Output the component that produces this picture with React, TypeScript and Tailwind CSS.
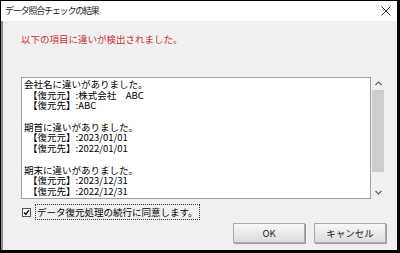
const lines = [
  "会社名に違いがありました。",
  "【復元元】:株式会社　ABC",
  "【復元先】:ABC",
  "",
  "期首に違いがありました。",
  "【復元元】:2023/01/01",
  "【復元先】:2022/01/01",
  "",
  "期末に違いがありました。",
  "【復元元】:2023/12/31",
  "【復元先】:2022/12/31",
];

function Chevron({ up }: { up?: boolean }) {
  return (
    <svg width="7" height="5" viewBox="0 0 7 5">
      <path
        d={up ? "M0.5 4 L3.5 1 L6.5 4" : "M0.5 1 L3.5 4 L6.5 1"}
        fill="none"
        stroke="#606060"
        strokeWidth="1.2"
      />
    </svg>
  );
}

export default function App() {
  return (
    <div className="flex h-[253px] w-[400px] flex-col border-t border-l border-r-[3px] border-b-[3px] border-black font-['Noto_Sans_CJK_JP',sans-serif] text-black">
      <div className="flex h-[20px] items-center justify-between bg-white pl-[4px] pr-[6px]">
        <span className="text-[9px] leading-[12px] tracking-[-1.2px] text-[#1a1a1a]">
          データ照合チェックの結果
        </span>
        <svg width="10" height="10" viewBox="0 0 10 10">
          <path d="M0.5 0.5 L9.5 9.5 M9.5 0.5 L0.5 9.5" stroke="#333" strokeWidth="1" />
        </svg>
      </div>

      <div className="flex flex-1 flex-col border-l-2 border-[#8c8c8c] bg-[#f0f0f0] pr-[11px]">
        <p className="mt-[12px] pl-[18px] text-[9.5px] leading-[12px] text-[#c8303a]">
          以下の項目に違いが検出されました。
        </p>

        <div className="ml-[18px] mt-[32px] flex h-[122px]">
          <div className="w-[353px] overflow-hidden border border-[#a0a0a0] bg-white pl-[2px] pt-[1px]">
            {lines.map((line, i) => (
              <div
                key={i}
                className={
                  line.startsWith("【")
                    ? "h-[10.7px] whitespace-pre pl-[4px] text-[9.5px] leading-[10.7px]"
                    : "h-[10.7px] whitespace-pre text-[9.5px] leading-[10.7px]"
                }
              >
                {line}
              </div>
            ))}
          </div>
          <div className="flex w-[15px] flex-col">
            <div className="flex h-[13px] items-center justify-center">
              <Chevron up />
            </div>
            <div className="ml-[1px] h-[82px] w-[12px] bg-[#cdcdcd]" />
            <div className="flex-1" />
            <div className="flex h-[14px] items-center justify-center">
              <Chevron />
            </div>
          </div>
        </div>

        <div className="ml-[19px] mt-[5px] flex h-[16px] items-center gap-[4px]">
          <div className="flex h-[9px] w-[9px] items-center justify-center border border-[#555] bg-white">
            <svg width="7" height="7" viewBox="0 0 7 7">
              <path d="M1 3.5 L2.8 5.5 L6 1.2" fill="none" stroke="#111" strokeWidth="1.4" />
            </svg>
          </div>
          <span className="border border-dotted border-[#333] px-[1px] text-[9.5px] leading-[14px]">
            データ復元処理の続行に同意します。
          </span>
        </div>

        <div className="mt-[3px] flex justify-end gap-[9px]">
          <button
            type="button"
            className="h-[20px] w-[72px] border border-[#acacac] bg-linear-to-b from-[#f7f7f7] to-[#dcdcdc] text-[9.5px] leading-[18px] text-[#222] shadow-[1px_1px_0_#9a9a9a]"
          >
            OK
          </button>
          <button
            type="button"
            className="h-[20px] w-[72px] border border-[#acacac] bg-linear-to-b from-[#f7f7f7] to-[#dcdcdc] text-[9.5px] leading-[18px] text-[#222] shadow-[1px_1px_0_#9a9a9a]"
          >
            キャンセル
          </button>
        </div>
      </div>
    </div>
  );
}
